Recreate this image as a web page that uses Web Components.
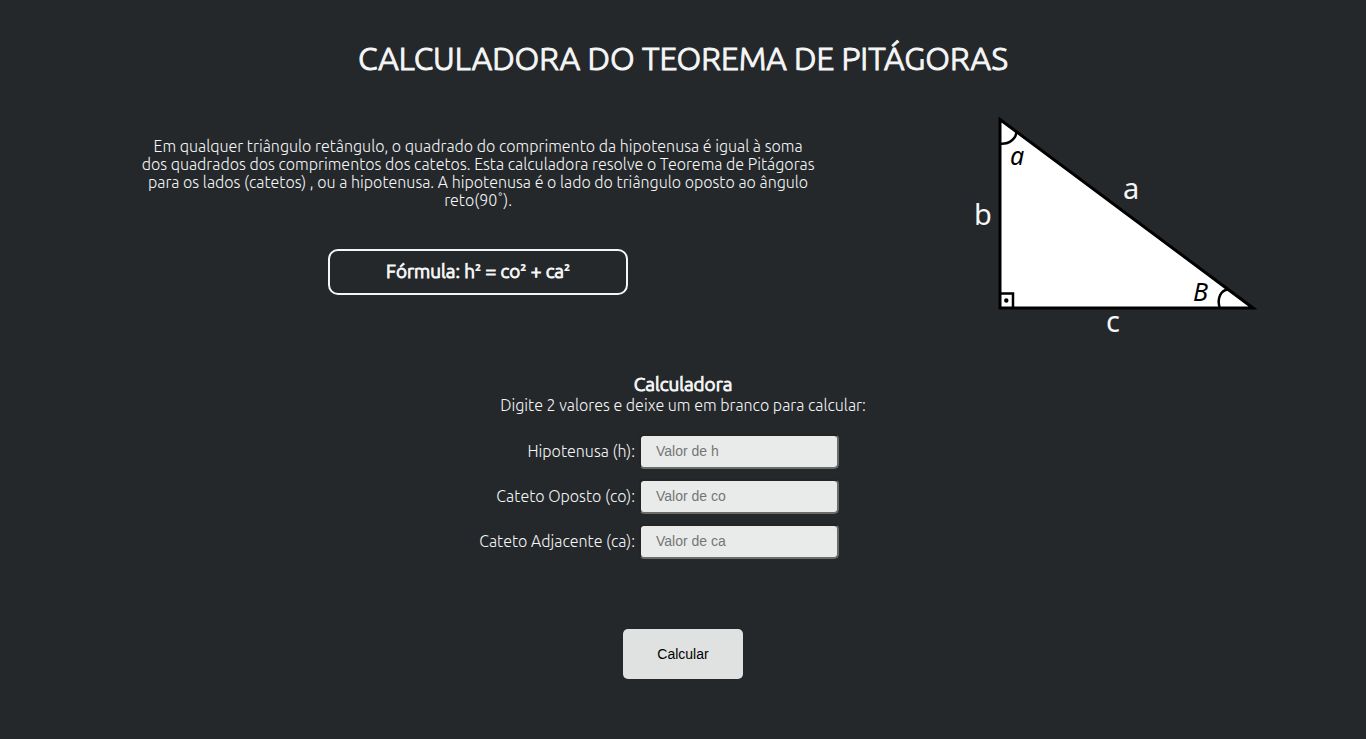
<!DOCTYPE html>
<html lang="pt-BR">
<head>
<meta charset="utf-8">
<meta name="viewport" content="width=device-width, initial-scale=1">
<title>Calculadora do Teorema de Pitágoras</title>
<style>
body {
  margin: 0;
  min-height: 100vh;
  background: #24282b;
  color: #f5f6f6;
  font: 300 16px/18px Ubuntu, Roboto, "Noto Sans", sans-serif;
}
</style>
</head>
<body>
<pitagoras-page>
  <theorem-intro slot="intro"></theorem-intro>
  <triangle-figure slot="figure"></triangle-figure>
  <calc-form slot="form"></calc-form>
</pitagoras-page>

<template id="page-template">
  <style>
    :host { display: block; padding: 39px 0 60px; }
    h1 { margin: 0; font-size: 32px; line-height: 38px; font-weight: 300; text-align: center; -webkit-text-stroke: 1px; }
    .top { display: flex; justify-content: space-between; gap: 32px; padding: 36px 8% 0 10%; }
    .text { flex: 0 1 683px; padding-top: 24px; }
  </style>
  <header><h1>CALCULADORA DO TEOREMA DE PITÁGORAS</h1></header>
  <main>
    <section class="top">
      <div class="text"><slot name="intro"></slot></div>
      <slot name="figure"></slot>
    </section>
    <slot name="form"></slot>
  </main>
</template>

<template id="intro-template">
  <style>
    :host { display: flex; flex-direction: column; align-items: center; gap: 40px; text-align: center; }
    p { margin: 0; }
    .formula { box-sizing: border-box; width: 300px; padding: 10px 11px 12px; border: 2px solid; border-radius: 10px; font-size: 19px; line-height: 20px; -webkit-text-stroke: 1px; }
    .formula span { font: 700 16px/16px "Noto Sans", sans-serif; -webkit-text-stroke: 0; }
  </style>
  <p>Em qualquer triângulo retângulo, o quadrado do comprimento da hipotenusa é igual à soma<br>
  dos quadrados dos comprimentos dos catetos. Esta calculadora resolve o Teorema de Pitágoras<br>
  para os lados (catetos) , ou a hipotenusa. A hipotenusa é o lado do triângulo oposto ao ângulo<br>
  reto(90˚).</p>
  <p class="formula">Fórmula: h<span>²</span> = co<span>²</span> + ca<span>²</span></p>
</template>

<template id="figure-template">
  <style>
    :host { display: block; flex: 0 0 284px; }
    svg { display: block; width: 100%; }
    text { font-family: "Noto Sans", sans-serif; font-weight: 400; }
    .side { font-size: 29px; fill: #f5f6f6; }
    .angle { font-size: 25px; font-style: italic; fill: #000; }
  </style>
  <svg viewBox="973 113 284 230" role="img" aria-label="Triângulo retângulo">
    <path d="M1000 119.500V308H1253Z" fill="#fff" stroke="#000" stroke-width="3"/>
    <g fill="none" stroke="#000" stroke-width="2.500">
      <path d="M1000 143.800C1010 144.500 1016.500 138 1016.500 131"/>
      <path d="M1219.500 307C1217 298 1221 290 1228 289.500"/>
      <path d="M1000 293.500h13v14"/>
    </g>
    <circle cx="1006.300" cy="300.500" r="2.200"/>
    <text class="side" x="974" y="225">b</text>
    <text class="side" x="1123" y="199">a</text>
    <text class="side" x="1106" y="332">c</text>
    <text class="angle" x="1010" y="165">a</text>
    <text class="angle" x="1193" y="301">B</text>
  </svg>
</template>

<template id="form-template">
  <style>
    :host { display: block; padding-top: 31px; text-align: center; }
    h2 { margin: 0; font-size: 19px; line-height: 21px; font-weight: 300; -webkit-text-stroke: 1px; }
    p { margin: 0; line-height: 21px; }
    .fields { display: grid; justify-content: center; gap: 10px; padding: 18px 48px 0 0; }
    button { width: 120px; height: 50px; margin-top: 70px; border: 0; border-radius: 5px; background: #dfe2e1; color: #000; font: 14px "Liberation Sans", Arial, sans-serif; }
  </style>
  <form>
    <h2>Calculadora</h2>
    <p>Digite 2 valores e deixe um em branco para calcular:</p>
    <div class="fields">
      <value-field label="Hipotenusa (h):" hint="Valor de h"></value-field>
      <value-field label="Cateto Oposto (co):" hint="Valor de co"></value-field>
      <value-field label="Cateto Adjacente (ca):" hint="Valor de ca"></value-field>
    </div>
    <button type="button">Calcular</button>
  </form>
</template>

<template id="field-template">
  <style>
    :host { display: grid; grid-template-columns: 156px 200px; gap: 4px; align-items: center; }
    label { padding-bottom: 2px; text-align: right; white-space: nowrap; }
    input { box-sizing: border-box; width: 100%; height: 35px; padding: 0 15px 2px; border: 2px solid; border-color: #242424 #6b6b6b #6b6b6b #242424; border-radius: 5px; background: #e9ebea; color: #000; font: 14px "Liberation Sans", Arial, sans-serif; }
    input::placeholder { color: #757575; }
  </style>
  <label for="value"></label>
  <input id="value" type="text">
</template>

<script>
const define = (name, template, setup) =>
  customElements.define(name, class extends HTMLElement {
    constructor() {
      super();
      this.attachShadow({ mode: "open" })
        .append(document.getElementById(template).content.cloneNode(true));
    }
    connectedCallback() { setup?.(this, this.shadowRoot); }
  });

define("value-field", "field-template", (host, root) => {
  root.querySelector("label").textContent = host.getAttribute("label");
  root.querySelector("input").placeholder = host.getAttribute("hint");
});
define("theorem-intro", "intro-template");
define("triangle-figure", "figure-template");
define("calc-form", "form-template", (host, root) => {
  const inputs = [...root.querySelectorAll("value-field")].map(f => f.shadowRoot.querySelector("input"));
  root.querySelector("button").onclick = () => {
    const [h, co, ca] = inputs.map(i => i.value === "" ? null : Number(i.value));
    if ([h, co, ca].filter(v => v === null).length !== 1) return;
    if (h === null) inputs[0].value = Math.hypot(co, ca);
    else if (co === null) inputs[1].value = Math.sqrt(h * h - ca * ca);
    else inputs[2].value = Math.sqrt(h * h - co * co);
  };
});
define("pitagoras-page", "page-template");
</script>
</body>
</html>
